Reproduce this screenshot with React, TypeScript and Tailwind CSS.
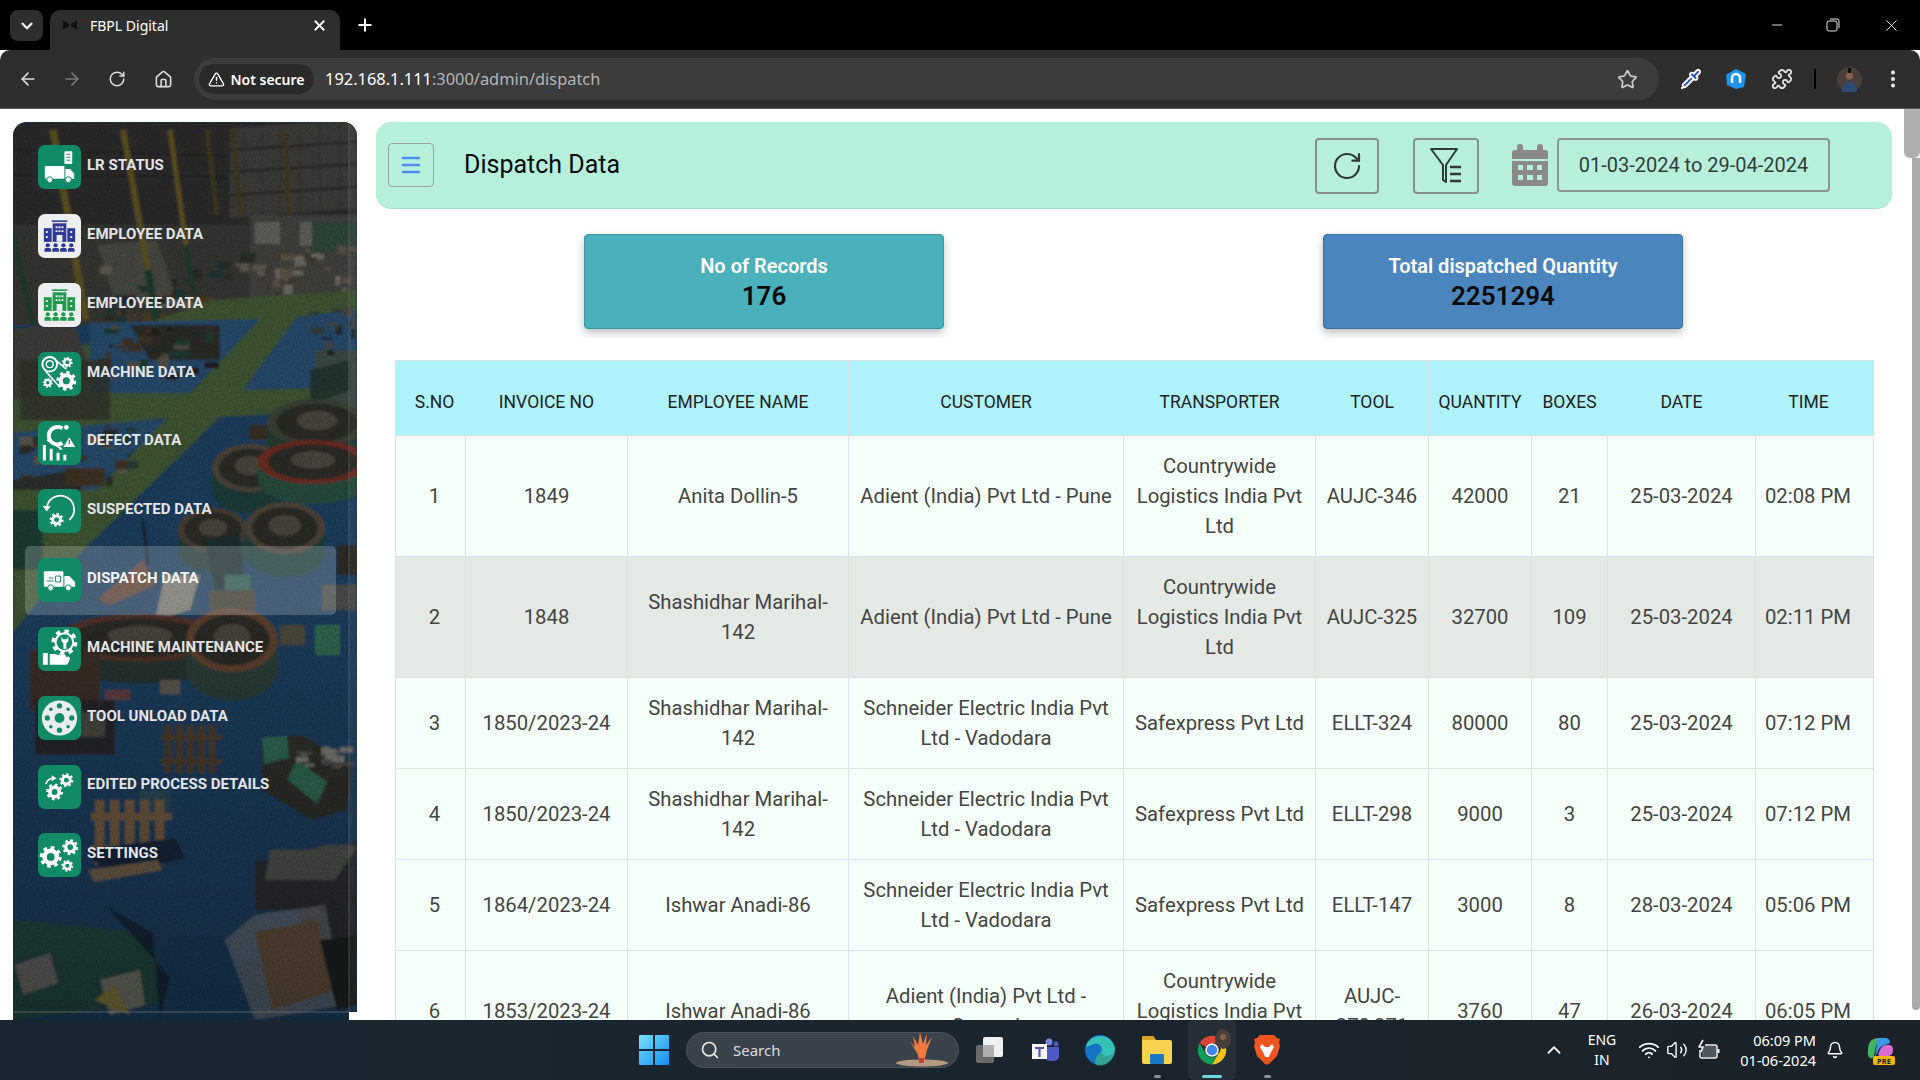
import React from 'react';
import { ArrowLeft, ArrowRight, Bell, ChevronDown, ChevronUp, House, Menu, Minus, MoreVertical, Pipette, Plus, Puzzle, RotateCw, Search, Star, TriangleAlert, Volume2, Wifi, X } from 'lucide-react';

const GREEN = '#118a66';

const Gear = ({ x, y, r, fill = '#fff', hole = GREEN }: { x: number; y: number; r: number; fill?: string; hole?: string }) => (
  <g>
    <circle cx={x} cy={y} r={r * 0.78} fill={fill} />
    <circle cx={x} cy={y} r={r * 0.86} fill="none" stroke={fill} strokeWidth={r * 0.32} pathLength={16} strokeDasharray="1 1" />
    <circle cx={x} cy={y} r={r * 0.36} fill={hole} />
  </g>
);

const LrIcon = () => (
  <g fill="#fff">
    <rect x="27" y="6" width="8" height="13" rx="1" />
    <path d="M29 9h4M29 12h4M29 15h4" stroke={GREEN} strokeWidth="1" />
    <rect x="7" y="21" width="20" height="13" />
    <path d="M28 24h5l4 5v5H28z" />
    <circle cx="12" cy="35" r="3" stroke={GREEN} />
    <circle cx="31" cy="35" r="3" stroke={GREEN} />
  </g>
);

const BuildingIcon = ({ color }: { color: string }) => (
  <g fill={color}>
    <rect x="14" y="6" width="16" height="1.6" />
    <rect x="15" y="9" width="14" height="19" />
    <rect x="6" y="14" width="8" height="14" />
    <rect x="30" y="14" width="8" height="14" />
    <path d="M19 28v-7h6v7z" fill="#eceef0" />
    <path d="M18 12h2v2h-2zM21 12h2v2h-2zM24 12h2v2h-2zM18 16h2v2h-2zM21 16h2v2h-2zM24 16h2v2h-2zM8 17h2v2H8zM8 22h2v2H8zM33 17h2v2h-2zM33 22h2v2h-2z" fill="#eceef0" />
    {[10, 18, 26, 34].map(x => (
      <g key={x}>
        <circle cx={x} cy={31.5} r="2.2" />
        <path d={`M${x - 3.4} 38v-2.2q0-1.6 1.6-1.6h3.6q1.6 0 1.6 1.6V38z`} />
      </g>
    ))}
  </g>
);

const MachineIcon = () => (
  <g>
    <circle cx="12" cy="12" r="7.5" fill="none" stroke="#fff" strokeWidth="2" />
    <circle cx="12" cy="12" r="3.5" fill="none" stroke="#fff" strokeWidth="1.4" />
    <path d="M6 17l16 18M17 7l12 10" stroke="#fff" strokeWidth="1.6" fill="none" />
    <Gear x={30} y={10} r={5.5} />
    <Gear x={10} y={31} r={5} />
    <Gear x={29} y={29} r={10} />
  </g>
);

const DefectIcon = () => (
  <g fill="#fff">
    <path d="M5 40V24h3v16zM12 40V28h3v12zM19 40V32h3v8zM26 40v-6h3v6z" />
    <path d="M9 19l15 9" stroke="#fff" strokeWidth="1.3" />
    <path d="M25 29l-4-.4 1.800-3z" />
    <path d="M25 7a9 9 0 1 0 0 15" fill="none" stroke="#fff" strokeWidth="4" />
    <circle cx="29" cy="6" r="2.400" />
    <path d="M32 16l6 10H26z" />
    <path d="M32 19v4" stroke={GREEN} strokeWidth="1.3" />
  </g>
);

const SuspectedIcon = () => (
  <g>
    <path d="M9 19A14 14 0 1 1 32 31" fill="none" stroke="#fff" strokeWidth="1.8" />
    <path d="M5 17h8l-4 5.500z" fill="#fff" />
    <Gear x={19} y={31} r={7} />
  </g>
);

const DispatchIcon = () => (
  <g fill="#fff">
    <rect x="6" y="13" width="20" height="16" rx="1" />
    <path d="M27 18h5l6 6v5H27z" />
    <circle cx="13" cy="30" r="3" stroke={GREEN} />
    <circle cx="31" cy="30" r="3" stroke={GREEN} />
    <path d="M11 20h5M9 23h7M18 18h5v6h-5z" stroke={GREEN} strokeWidth="1" fill="none" />
  </g>
);

const MaintenanceIcon = () => (
  <g fill="#fff">
    <Gear x={27} y={15} r={13} hole={GREEN} />
    <circle cx="27" cy="15" r="8" fill={GREEN} />
    <path d="M24 9v5l2 2v6h3v-6l2-2V9l-1.500 3h-4z" />
    <path d="M5 26h5v12H5zM12 27h5l3 1h7q2 0 1.600 2h3q1.800 1 .8 3l-1 2q-.6 3-3 3H12z" />
  </g>
);

const ToolIcon = () => (
  <g>
    <circle cx="22" cy="22" r="18" fill="#e9edf0" />
    <circle cx="22" cy="22" r="5" fill={GREEN} />
    {[0, 45, 90, 135, 180, 225, 270, 315].map((a, i) => (
      <circle key={a} cx={22 + 12.5 * Math.cos((a * Math.PI) / 180)} cy={22 + 12.5 * Math.sin((a * Math.PI) / 180)} r={i % 2 ? 1.8 : 2.7} fill={GREEN} />
    ))}
  </g>
);

const EditedIcon = () => (
  <g>
    <Gear x={29} y={15} r={7} />
    <Gear x={17} y={27} r={8.500} />
    <path d="M8 19q2-6 8-6" fill="none" stroke="#fff" strokeWidth="1.6" />
    <path d="M14 10l5 3-5 3z" fill="#fff" />
  </g>
);

const SettingsIcon = () => (
  <g>
    <Gear x={13} y={24} r={11} />
    <Gear x={33} y={14} r={8} />
    <Gear x={30} y={33} r={6} />
  </g>
);

const navItems: { label: string; icon: React.ReactNode; light?: boolean; active?: boolean }[] = [
  { label: 'LR STATUS', icon: <LrIcon /> },
  { label: 'EMPLOYEE DATA', icon: <BuildingIcon color="#2f3a96" />, light: true },
  { label: 'EMPLOYEE DATA', icon: <BuildingIcon color="#1f9a4a" />, light: true },
  { label: 'MACHINE DATA', icon: <MachineIcon /> },
  { label: 'DEFECT DATA', icon: <DefectIcon /> },
  { label: 'SUSPECTED DATA', icon: <SuspectedIcon /> },
  { label: 'DISPATCH DATA', icon: <DispatchIcon />, active: true },
  { label: 'MACHINE MAINTENANCE', icon: <MaintenanceIcon /> },
  { label: 'TOOL UNLOAD DATA', icon: <ToolIcon /> },
  { label: 'EDITED PROCESS DETAILS', icon: <EditedIcon /> },
  { label: 'SETTINGS', icon: <SettingsIcon /> },
];

const Bowl = ({ x, y, rx, ry, rim = '#3f3a32', side = '#1e3d3a' }: { x: number; y: number; rx: number; ry: number; rim?: string; side?: string }) => (
  <g>
    <path d={`M${x - rx} ${y}v${ry * 0.9}a${rx} ${ry} 0 0 0 ${rx * 2} 0V${y}z`} fill={side} />
    <ellipse cx={x} cy={y} rx={rx} ry={ry} fill={rim} />
    <ellipse cx={x} cy={y} rx={rx * 0.82} ry={ry * 0.8} fill="#2c2a27" />
    <ellipse cx={x} cy={y - ry * 0.1} rx={rx * 0.4} ry={ry * 0.4} fill="#4a453d" />
  </g>
);

const Pallet = ({ x, y, w, h, c = '#4a3a2c' }: { x: number; y: number; w: number; h: number; c?: string }) => (
  <g fill={c}>
    {[0, 1, 2, 3, 4].map(i => (
      <rect key={i} x={x + (i * w) / 5} y={y} width={w / 8} height={h} />
    ))}
    <rect x={x - 4} y={y + h * 0.2} width={w + 6} height={h / 9} />
    <rect x={x - 4} y={y + h * 0.7} width={w + 6} height={h / 9} />
  </g>
);

// small bits of machinery scattered over a patch of the floor
const clutter = (x: number, y: number, w: number, h: number, n: number, colors: string[]) => {
  let seed = Math.round(x * 7 + y * 13 + n);
  const next = () => {
    seed = (seed * 1103 + 12345) % 65536;
    return seed / 65536;
  };
  return Array.from({ length: n }, (_, i) => (
    <rect key={i} x={x + next() * w} y={y + next() * h} width={3 + next() * 12} height={2 + next() * 9} fill={colors[i % colors.length]} />
  ));
};

// factory photo from the reference, drawn in page coordinates
const FactoryPhoto = () => (
  <svg className="absolute inset-0 w-full h-full" viewBox="13 122 344 898" preserveAspectRatio="none">
    <defs>
      <filter id="soft" x="0" y="0" width="100%" height="100%"><feGaussianBlur stdDeviation="1" /></filter>
      <filter id="grain" x="0" y="0" width="100%" height="100%">
        <feTurbulence type="fractalNoise" baseFrequency="0.55" numOctaves="2" seed="4" />
        <feColorMatrix values="0 0 0 0 0  0 0 0 0 0  0 0 0 0 0  0.9 0 0 0 -0.25" />
      </filter>
      <linearGradient id="floorShade" x1="0" y1="0" x2="0" y2="1">
        <stop offset="0" stopColor="#000" stopOpacity="0" />
        <stop offset="1" stopColor="#000" stopOpacity="0.28" />
      </linearGradient>
    </defs>
    <g filter="url(#soft)">
      <rect x="13" y="122" width="344" height="898" fill="#1c3d5c" />
      <rect x="13" y="122" width="344" height="120" fill="#2b2c2b" />
      <path d="M230 128l127-8v88l-127 10z" fill="#3b3b38" />
      <path d="M230 150l127-8M230 172l127-8M230 195l127-8M13 150l217 6M13 175l217 2" stroke="#242423" strokeWidth="2" />
      <path d="M245 130v85M262 130v85M280 128v86M300 126v88M320 124v88M340 122v88" stroke="#2f2f2d" strokeWidth="1" />
      <rect x="13" y="225" width="344" height="100" fill="#353532" />
      <path d="M250 215h107v90l-107 10z" fill="#41413d" />
      <path d="M310 222h47v30h-47z" fill="#2f4437" />
      <path d="M255 222h25v22h-25zM300 222h12v24h-12z" fill="#5d5e58" />
      <path d="M97 245l60-5 20 60-60 8z" fill="#44463f" />
      {clutter(95, 250, 170, 70, 46, ['#2a2a27', '#4b3a26', '#1e3533', '#5c5a50'])}
      {clutter(265, 245, 90, 50, 26, ['#5a5146', '#3e3a31', '#6a6a64'])}
      <path d="M53 130l33 190" stroke="#5c4f20" strokeWidth="7" />
      <path d="M123 130l25 140" stroke="#5c4f20" strokeWidth="6" />
      <path d="M148 270l8 50" stroke="#1e3a2c" strokeWidth="7" />
      <path d="M170 130l16 115" stroke="#5c4f20" strokeWidth="5" />
      <path d="M186 245l8 50" stroke="#1e3a2c" strokeWidth="5" />
      <path d="M207 130l10 85M233 130l8 85M285 130l4 85" stroke="#43391c" strokeWidth="4" />
      <path d="M13 235l20 90" stroke="#1e3a2c" strokeWidth="5" />
      <path d="M357 290v120l-137 7-160 156-47 60V370l200-70z" fill="#3c5230" />
      <path d="M13 330l60-10 20 60-80 20z" fill="#3c3b37" />
      <path d="M90 323l170-4-70 74H90z" fill="#28496a" />
      <path d="M297 317l60-7v77l-114 3z" fill="#28496a" />
      <path d="M13 433l154-15-70 72H13z" fill="#28496a" />
      {clutter(18, 425, 110, 55, 30, ['#2b2b27', '#3c3226', '#233a34', '#55534a'])}
      <path d="M13 480l60-10 10 20H13z" fill="#2c2d2b" />
      <path d="M130 325h90v35h-70z" fill="#2a2a27" />
      {clutter(95, 325, 110, 50, 30, ['#211f1d', '#3d3328', '#1e3a33', '#514d44'])}
      <path d="M20 360h90v60H20z" fill="#2e322a" opacity="0.85" />
      <path d="M315 350h42v70h-42z" fill="#3b4a44" />
      <path d="M310 370l40-10v30l-40 15z" fill="#24352f" />
      {clutter(305, 305, 50, 50, 14, ['#2d3d37', '#45453f', '#22221f'])}
      <rect x="13" y="510" width="30" height="60" fill="#1e3a33" />
      <rect x="65" y="468" width="40" height="18" fill="#3d3023" />
      <rect x="250" y="425" width="50" height="15" fill="#372f27" />
      <Bowl x={317} y={423} rx={50} ry={24} rim="#3b4034" side="#213a33" />
      <Bowl x={250} y={468} rx={38} ry={24} rim="#4b4238" side="#1f3a39" />
      <Bowl x={313} y={462} rx={55} ry={22} rim="#6a2a24" side="#25493b" />
      <Bowl x={213} y={530} rx={35} ry={22} rim="#453d33" side="#213a39" />
      <Bowl x={285} y={528} rx={40} ry={26} rim="#4b4238" side="#1f3d3b" />
      <path d="M143 560l12 25-45 20-12-6z" fill="#5d3f33" />
      <path d="M143 520l5 45" stroke="#1e2025" strokeWidth="3" />
      <path d="M165 575l35 0-10 35-35 10z" fill="#77766e" />
      <path d="M205 540l35-5 5 50-30 5z" fill="#1c2f33" />
      <rect x="225" y="575" width="25" height="35" fill="#2d5a4f" />
      <rect x="210" y="590" width="45" height="20" fill="#3d3a33" />
      <rect x="322" y="585" width="35" height="25" fill="#4a4a47" />
      <rect x="337" y="545" width="20" height="30" fill="#2f2b25" />
      <Bowl x={140} y={638} rx={82} ry={24} rim="#4f3027" side="#27332f" />
      <Bowl x={232} y={640} rx={46} ry={32} rim="#5c3f2d" side="#2c3d37" />
      <rect x="280" y="625" width="25" height="20" fill="#4b4a3a" />
      <rect x="315" y="625" width="25" height="30" fill="#2f6650" />
      <rect x="30" y="650" width="70" height="60" fill="#3a2d28" />
      <rect x="35" y="700" width="80" height="55" fill="#26282a" />
      <rect x="50" y="712" width="55" height="25" fill="#55544c" opacity="0.7" />
      <rect x="160" y="680" width="20" height="14" fill="#5a5750" />
      <rect x="105" y="690" width="25" height="10" fill="#5b3c3f" />
      <Pallet x={165} y={725} w={55} h={48} />
      <path d="M262 740l40-5 50 30-5 45-35 10-50-30z" fill="#2e2e2a" />
      <path d="M262 738l25-2 2 22-25 6zM297 760l30 22-10 22-30-25z" fill="#2e6652" />
      {clutter(295, 745, 45, 25, 16, ['#77766f', '#4d4d48'])}
      <rect x="140" y="790" width="30" height="22" fill="#2a4756" />
      <Pallet x={95} y={800} w={75} h={65} c="#6e583f" />
      <path d="M85 850l90-12 10 20-75 20z" fill="#14273a" />
      <path d="M88 870l70-10 4 10-68 12z" fill="#6e5d48" />
      <path d="M255 860h45q40-10 57-20v130h-40l-20-60h-42z" fill="#2c2f31" />
      <path d="M265 880h70l20-30v-5h-30l-15 5h-40z" fill="#4f4f4b" />
      <path d="M255 915l70-10 20 100-90 15-30-80z" fill="#75767a" opacity="0.6" />
      <path d="M255 932l62-12 20 70-65 20z" fill="#5f4d3b" />
      <path d="M320 940l37-5v70l-20 5z" fill="#1f2022" />
      <path d="M13 920l140 13 8 70-148 17z" fill="#24453f" />
      <path d="M107 907l63 70-10 43-7-87z" fill="#122838" />
      <path d="M15 965l35-12 8 30-35 12z" fill="#62635f" />
      <path d="M100 980l40-10 5 35-35 10z" fill="#6d6d65" />
      <path d="M95 1000l20-15 15 30z" fill="#7d713a" />
    </g>
    <rect x="13" y="600" width="344" height="420" fill="url(#floorShade)" />
    <rect x="13" y="122" width="344" height="898" filter="url(#grain)" opacity="0.35" />
    <rect x="349" y="122" width="8" height="890" fill="#fff" opacity="0.04" />
    <path d="M13 1012h336" stroke="#7f7f7f" strokeWidth="1" opacity="0.6" />
    <path d="M349 122v890" stroke="#777" strokeWidth="1" opacity="0.5" />
  </svg>
);

const Sidebar = () => (
  <aside className="relative ml-[13px] mt-[13px] w-[344px] shrink-0 rounded-t-[14px] overflow-hidden bg-[#1d3b57] pt-[11px] pl-[12px]">
    <FactoryPhoto />
    <div className="relative flex flex-col">
      {navItems.map((item, i) => (
        <a key={i} className={`flex items-center h-[68.8px] w-[311px] pl-[13px] rounded-[5px] ${item.active ? 'bg-white/20' : ''}`}>
          <div className={`w-[43px] h-[44px] rounded-[7px] shrink-0 ${item.light ? 'bg-[#eceef0]' : 'bg-[#118a66]'}`}>
            <svg viewBox="0 0 44 44" className="w-full h-full">{item.icon}</svg>
          </div>
          <span className={`ml-[6px] mb-[4px] text-[15px] font-bold ${item.active ? 'text-[#f3f4f6]' : 'text-[#e2e4e8]'}`}>{item.label}</span>
        </a>
      ))}
    </div>
    <div className="absolute right-0 bottom-0 w-[8px] h-[8px] bg-white" />
  </aside>
);

const rows = [
  ['1', '1849', 'Anita Dollin-5', 'Adient (India) Pvt Ltd - Pune', 'Countrywide Logistics India Pvt Ltd', 'AUJC-346', '42000', '21', '25-03-2024', '02:08 PM'],
  ['2', '1848', 'Shashidhar Marihal-142', 'Adient (India) Pvt Ltd - Pune', 'Countrywide Logistics India Pvt Ltd', 'AUJC-325', '32700', '109', '25-03-2024', '02:11 PM'],
  ['3', '1850/2023-24', 'Shashidhar Marihal-142', 'Schneider Electric India Pvt Ltd - Vadodara', 'Safexpress Pvt Ltd', 'ELLT-324', '80000', '80', '25-03-2024', '07:12 PM'],
  ['4', '1850/2023-24', 'Shashidhar Marihal-142', 'Schneider Electric India Pvt Ltd - Vadodara', 'Safexpress Pvt Ltd', 'ELLT-298', '9000', '3', '25-03-2024', '07:12 PM'],
  ['5', '1864/2023-24', 'Ishwar Anadi-86', 'Schneider Electric India Pvt Ltd - Vadodara', 'Safexpress Pvt Ltd', 'ELLT-147', '3000', '8', '28-03-2024', '05:06 PM'],
  ['6', '1853/2023-24', 'Ishwar Anadi-86', 'Adient (India) Pvt Ltd - Sanand', 'Countrywide Logistics India Pvt Ltd', 'AUJC-370,371', '3760', '47', '26-03-2024', '06:05 PM'],
];
const headers = ['S.NO', 'INVOICE NO', 'EMPLOYEE NAME', 'CUSTOMER', 'TRANSPORTER', 'TOOL', 'QUANTITY', 'BOXES', 'DATE', 'TIME'];
const colWidths = ['w-[70px]', 'w-[162px]', 'w-[221px]', 'w-[275px]', 'w-[192px]', 'w-[113px]', 'w-[103px]', 'w-[76px]', 'w-[148px]', 'w-[118px]'];

// first and last columns sit a little off centre in the reference
const cellPad = (j: number) => (j === 0 ? 'pl-[15px] pr-[7px]' : j === 9 ? 'pl-[7px] pr-[20px]' : 'px-[7px]');

const DispatchTable = () => (
  <table className="ml-[19px] mt-[31px] w-[1478px] table-fixed border-collapse text-center">
    <colgroup>
      {colWidths.map((w, i) => <col key={i} className={w} />)}
    </colgroup>
    <thead>
      <tr className="bg-[#aef2fc] h-[75px]">
        {headers.map((h, j) => (
          <th key={h} className={`border border-[#dadfe3] font-normal text-[17.5px] text-[#222] pt-[8px] ${j === 0 ? 'pl-[8px]' : j === 9 ? 'pr-[12px]' : ''}`}>{h}</th>
        ))}
      </tr>
    </thead>
    <tbody>
      {rows.map((row, i) => (
        <tr key={i} className={i === 1 ? 'bg-[#e5e9e6]' : 'bg-[#f5fff9]'}>
          {row.map((cell, j) => (
            <td key={j} className={`border border-[#dde2e7] py-[15px] text-[20.3px] leading-[30px] text-[#444] ${cellPad(j)}`}>{cell}</td>
          ))}
        </tr>
      ))}
    </tbody>
  </table>
);

const PageHeader = () => (
  <div className="flex items-center h-[87px] rounded-[15px] bg-[#b6f0db] border-b border-[#a6dfcb] pl-[12px]">
    <button className="w-[46px] h-[44px] flex items-center justify-center rounded-[4px] border border-[#9aa5a2]">
      <Menu size={24} strokeWidth={2.4} color="#4f8ef0" />
    </button>
    <h1 className="ml-[30px] text-[25px] text-[#0a0a0a] font-normal">Dispatch Data</h1>
    <button className="ml-auto mt-[2px] w-[64px] h-[56px] flex items-center justify-center rounded-[4px] border-2 border-[#8b8f8d]">
      <RotateCw size={32} strokeWidth={1.6} color="#2f3a36" />
    </button>
    <button className="ml-[34px] mt-[2px] w-[66px] h-[56px] flex items-center justify-center rounded-[4px] border-2 border-[#8b8f8d]">
      <svg width="38" height="42" viewBox="0 0 38 42" fill="none" stroke="#2f3a36" strokeWidth="2">
        <path d="M4 4h26L19 20v17l-3-2V20z" strokeLinejoin="round" />
        <path d="M23 22h11M23 29h11M23 36h11" strokeWidth="2.6" />
      </svg>
    </button>
    <svg className="ml-[33px]" width="36" height="42" viewBox="0 0 36 42" fill="#8a8a8a">
      <path d="M8 0a3 3 0 0 1 3 3v3h14V3a3 3 0 0 1 6 0v3h2a3 3 0 0 1 3 3v6H0V9a3 3 0 0 1 3-3h2V3a3 3 0 0 1 3-3z" />
      <path fillRule="evenodd" d="M0 17h36v22a3 3 0 0 1-3 3H3a3 3 0 0 1-3-3zM6 21v5h5v-5zM15 21v5h6v-5zM25 21v5h5v-5zM6 31v5h5v-5zM15 31v5h6v-5zM25 31v5h5v-5z" />
    </svg>
    <div className="ml-[9px] mr-[62px] w-[273px] h-[54px] flex items-center justify-center rounded-[4px] border-2 border-[#8f9593] text-[20px] text-[#333d39]">
      01-03-2024 to 29-04-2024
    </div>
  </div>
);

const StatCard = ({ label, value, className }: { label: string; value: string; className: string }) => (
  <div className={`w-[360px] h-[95px] pt-[2px] rounded-[4px] border flex flex-col items-center justify-center shadow-[0_4px_8px_rgba(0,0,0,0.25)] ${className}`}>
    <span className="text-[20px] leading-[26px] font-semibold text-white">{label}</span>
    <span className="text-[26px] leading-[34px] font-semibold text-[#0a0a0a]">{value}</span>
  </div>
);

const TabStrip = () => (
  <div className="h-[50px] bg-black flex items-end shrink-0 text-white">
    <div className="ml-[10px] mb-[9px] w-[33px] h-[31px] rounded-[8px] bg-[#2e2e2e] flex items-center justify-center">
      <ChevronDown size={18} strokeWidth={3} />
    </div>
    <div className="ml-[7px] w-[290px] h-[40px] rounded-t-[10px] bg-[#2e2e2e] flex items-center pl-[12px] pr-[12px] pb-[10px]">
      <svg width="16" height="16" viewBox="0 0 16 16" fill="#111"><path d="M1 3l6 4v2l-6 4zM15 3L9 7v2l6 4z" /></svg>
      <span className="ml-[12px] text-[14px] font-['Noto_Sans']">FBPL Digital</span>
      <X className="ml-auto" size={17} strokeWidth={2.5} />
    </div>
    <Plus className="ml-[15px] mb-[15px]" size={20} strokeWidth={2.4} />
    <div className="ml-auto flex items-center self-start h-[50px] text-[#e8e8e8]">
      <Minus size={16} strokeWidth={1.4} />
      <svg className="ml-[41px]" width="14" height="14" viewBox="0 0 14 14" fill="none" stroke="currentColor"><rect x="1" y="3" width="10" height="10" rx="2" /><path d="M4 1h7a2 2 0 0 1 2 2v7" /></svg>
      <X className="ml-[42px] mr-[19px]" size={19} strokeWidth={1.2} />
    </div>
  </div>
);

const Toolbar = () => (
  <div className="h-[59px] bg-[#2e2e2e] rounded-t-[10px] border-b border-[#5a5a5a] flex items-center shrink-0 text-[#dcdcdc]">
    <ArrowLeft className="ml-[18px]" size={20} />
    <ArrowRight className="ml-[24px] text-[#7a7a7a]" size={20} />
    <RotateCw className="ml-[26px]" size={18} />
    <House className="ml-[28px]" size={19} />
    <div className="ml-[21px] w-[1465px] h-[42px] rounded-full bg-[#3c3c3c] flex items-center pl-[5px] pr-[21px]">
      <div className="w-[115px] h-[30px] rounded-full bg-[#2a2a2a] flex items-center justify-center gap-[5px] text-white">
        <TriangleAlert size={17} />
        <span className="text-[14px] font-semibold font-['Noto_Sans']">Not secure</span>
      </div>
      <span className="ml-[11px] mt-[1px] text-[16.4px] font-['Noto_Sans'] text-white">192.168.1.111<span className="text-[#b4b4b4]">:3000/admin/dispatch</span></span>
      <Star className="ml-auto" size={21} color="#c8c8c8" strokeWidth={2} />
    </div>
    <Pipette className="ml-[21px]" size={22} color="#fff" fill="#2f55c8" />
    <svg className="ml-[23px]" width="22" height="22" viewBox="0 0 22 22"><path d="M11 1l10 5-2 13-8 2-9-4-1-10z" fill="#1e96f0" /><path d="M7 15V10a4 4 0 0 1 8 0v5" fill="none" stroke="#fff" strokeWidth="2.4" /></svg>
    <Puzzle className="ml-[24px]" size={22} color="#e2e2e2" strokeWidth={2} />
    <div className="ml-[21px] w-[2px] h-[20px] bg-black" />
    <svg className="ml-[21px]" width="25" height="25" viewBox="0 0 25 25">
      <circle cx="12.5" cy="12.5" r="12.5" fill="#4a3f3a" />
      <circle cx="12.5" cy="9" r="3.5" fill="#8a6248" />
      <path d="M5 25q0-10 7.5-10T20 25z" fill="#2d4a74" />
      <rect x="11" y="1" width="3" height="5" fill="#111" />
    </svg>
    <MoreVertical className="ml-[20px]" size={22} color="#e8e8e8" strokeWidth={2.4} />
  </div>
);

const TaskIcon = ({ children, className = '' }: { children: React.ReactNode; className?: string }) => (
  <div className={`relative w-[40px] h-[60px] flex items-center justify-center ${className}`}>{children}</div>
);

const Taskbar = () => (
  <div className="relative z-10 h-[60px] shrink-0 bg-gradient-to-r from-[#1a2732] to-[#1b2229] flex items-center text-white font-['Noto_Sans']">
    <svg className="ml-[639px]" width="30" height="30" viewBox="0 0 30 30">
      <defs><linearGradient id="win" x1="0" y1="0" x2="1" y2="1"><stop offset="0" stopColor="#7ae0fb" /><stop offset="1" stopColor="#0f8df0" /></linearGradient></defs>
      <path d="M0 1q0-1 1-1h13v14H0zM16 0h13q1 0 1 1v13H16zM0 16h14v14H1q-1 0-1-1zM16 16h14v13q0 1-1 1H16z" fill="url(#win)" />
    </svg>
    <div className="ml-[17px] w-[273px] h-[36px] rounded-full bg-[#3a434b] border border-[#4b545c] flex items-center pl-[13px] pr-[8px]">
      <Search size={20} color="#e8e8e8" strokeWidth={2} />
      <span className="ml-[13px] text-[15px] text-[#d8dcdf]">Search</span>
      <svg className="ml-auto" width="56" height="36" viewBox="0 0 56 36">
        <ellipse cx="28" cy="31" rx="26" ry="3.5" fill="#b39a80" />
        <path d="M26 30l-3-9-7-12 5 6-2-11 5 9 2-13 3 12 4-11-1 12 6-8-5 13-3 12z" fill="#ef7a3e" />
        <rect x="25" y="26" width="5" height="5" fill="#c8392a" />
      </svg>
    </div>
    <TaskIcon className="ml-[11px]">
      <svg width="30" height="30" viewBox="0 0 30 30"><rect x="1" y="10" width="18" height="18" rx="2" fill="#6a6a6a" /><rect x="8" y="2" width="20" height="20" rx="2" fill="#f0f0f0" /><rect x="8" y="10" width="11" height="12" fill="#b0b0b0" /></svg>
    </TaskIcon>
    <TaskIcon className="ml-[15px]">
      <svg width="30" height="30" viewBox="0 0 30 30"><circle cx="19" cy="7" r="3.5" fill="#7b83eb" /><circle cx="26" cy="9" r="2.5" fill="#5059c9" /><path d="M13 12h16v9a5 5 0 0 1-5 5h-3a8 8 0 0 1-8-8z" fill="#5059c9" /><rect x="2" y="9" width="15" height="15" fill="#fff" /><path d="M5 12h9v2h-3.400v8H8.400v-8H5z" fill="#4b53bc" /></svg>
    </TaskIcon>
    <TaskIcon className="ml-[15px]">
      <svg width="32" height="32" viewBox="0 0 32 32"><circle cx="16" cy="16" r="15" fill="#1373c4" /><path d="M2 12A15 15 0 0 1 31 15c0 5-4 7-8 7-4 0-6-2-6-4 0-1 1-2 1-3 0-4-4-6-8-5-4 1-7 4-8 2z" fill="#35c1b4" /><path d="M31 15c0 5-4 7-8 7-4 0-6-2-6-4a10 10 0 0 0-5 13c10 3 19-6 19-16z" fill="#4fd46a" opacity="0.5" /></svg>
    </TaskIcon>
    <TaskIcon className="ml-[17px]">
      <svg width="32" height="30" viewBox="0 0 32 30"><path d="M1 3q0-2 2-2h9l3 4h14q2 0 2 2v20q0 2-2 2H3q-2 0-2-2z" fill="#f7d24c" /><path d="M1 3q0-2 2-2h9l3 4H1z" fill="#d9a520" /><rect x="9" y="19" width="14" height="10" rx="1" fill="#1a78c8" /></svg>
      <div className="absolute bottom-[2px] w-[7px] h-[3px] rounded-full bg-[#8a9096]" />
    </TaskIcon>
    <TaskIcon className="ml-[11px] rounded-[5px] bg-white/5 w-[48px]">
      <svg width="32" height="32" viewBox="0 0 32 32">
        <path d="M3.500 9A14.500 14.500 0 0 1 28.500 9H16a7 7 0 0 0-6.300 4z" fill="#db4437" />
        <path d="M28.500 9A14.500 14.500 0 0 1 16 30.500L22 20a7 7 0 0 0 0-11z" fill="#f4c20d" />
        <path d="M16 30.500A14.500 14.500 0 0 1 3.500 9L10 20a7 7 0 0 0 12 0z" fill="#0f9d58" />
        <circle cx="16" cy="16" r="6" fill="#4285f4" stroke="#fff" strokeWidth="1.500" />
      </svg>
      <svg className="absolute top-[9px] right-[5px]" width="16" height="20" viewBox="0 0 16 20"><ellipse cx="8" cy="10" rx="8" ry="10" fill="#4a3f3a" /><circle cx="8" cy="8" r="3" fill="#8a6248" /></svg>
      <div className="absolute bottom-[2px] w-[20px] h-[3px] rounded-full bg-[#6fd3de]" />
    </TaskIcon>
    <TaskIcon className="ml-[11px]">
      <svg width="28" height="32" viewBox="0 0 28 32"><path d="M7 1h14l3 3 3 1-1 4 1 3-3 10-8 8q-2 1-4 0l-8-8L1 12l1-3-1-4 3-1z" fill="#f0551f" /><path d="M9 10l3 3h4l3-3 2 3-4 7-1 3h-4l-1-3-4-7z" fill="#fff" /></svg>
      <div className="absolute bottom-[2px] w-[7px] h-[3px] rounded-full bg-[#8a9096]" />
    </TaskIcon>
    <ChevronUp className="ml-[256px]" size={22} color="#f0f0f0" />
    <div className="ml-[19px] w-[36px] text-center text-[14px] leading-[20px]"><div>ENG</div><div>IN</div></div>
    <Wifi className="ml-[18px]" size={22} />
    <Volume2 className="ml-[6px]" size={22} strokeWidth={1.5} />
    <svg className="ml-[9px]" width="24" height="22" viewBox="0 0 24 22" fill="none" stroke="#f2f2f2" strokeWidth="1.5">
      <path d="M8 6h10q2 0 2 2v9q0 2-2 2H5q-2 0-2-2v-6" />
      <path d="M20.500 10h2v4h-2z" fill="#f2f2f2" stroke="none" />
      <path d="M5 7h14v11H5z" fill="#f2f2f2" opacity="0.25" stroke="none" />
      <path d="M6 1L2 8h4l-2 5" strokeWidth="1.6" strokeLinejoin="round" />
    </svg>
    <div className="ml-[11px] w-[84px] text-right text-[14.5px] leading-[20px] whitespace-nowrap"><div>06:09 PM</div><div>01-06-2024</div></div>
    <Bell className="ml-[10px]" size={18} />
    <svg className="ml-[21px]" width="30" height="32" viewBox="0 0 30 32">
      <path d="M3 16q0-12 11-12h3q-5 2-6 8l-2 10q-1 3-4 2-3-2-2-8z" fill="#46b45e" />
      <path d="M12 4h8q5 0 5 5l-5 2q-5 1-7 6l-3 7q2-12 2-20z" fill="#3a98e8" />
      <path d="M16 14q2-3 6-3h2q4 0 4 5t-4 6h-9q-3 0-1-4z" fill="#d86ad0" />
      <rect x="8" y="22" width="22" height="9" rx="2" fill="#f2b900" />
      <text x="19" y="29.500" textAnchor="middle" fontSize="7.500" fontWeight="700" fill="#1a1a1a" fontFamily="Noto Sans">PRE</text>
    </svg>
  </div>
);

export default function App() {
  return (
    <div className="h-screen w-screen overflow-hidden flex flex-col bg-white font-['Roboto',sans-serif]">
      <TabStrip />
      <Toolbar />
      <main className="flex-1 min-h-0 flex overflow-hidden bg-white">
        <Sidebar />
        <section className="ml-[19px] mt-[13px] w-[1516px] shrink-0">
          <PageHeader />
          <div className="flex pl-[208px] gap-[379px] mt-[25px]">
            <StatCard label="No of Records" value="176" className="bg-[#4ab0bb] border-[#3a98a3]" />
            <StatCard label="Total dispatched Quantity" value="2251294" className="bg-[#4a86bd] border-[#3a70a6]" />
          </div>
          <DispatchTable />
        </section>
        <div className="ml-auto w-[16px] shrink-0 flex flex-col items-end">
          <div className="w-[16px] h-[49px] rounded-b-[6px] bg-[#b0b0b0]" />
          <div className="w-[8px] h-[852px] rounded-b-[4px] bg-[#ababab]" />
        </div>
      </main>
      <Taskbar />
    </div>
  );
}
